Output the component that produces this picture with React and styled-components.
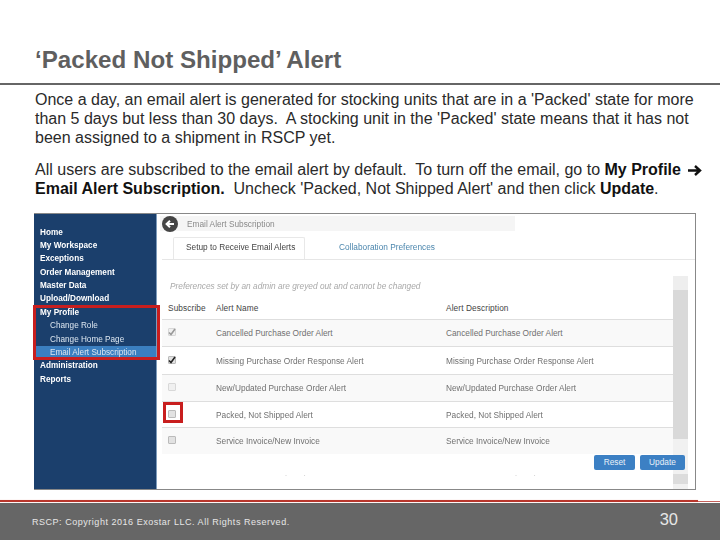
import React from "react";
import styled, { createGlobalStyle } from "styled-components";

const GlobalStyle = createGlobalStyle`
  html, body {
    margin: 0;
    padding: 0;
    background: #fff;
    font-family: "Liberation Sans", Arial, sans-serif;
  }
`;

const Slide = styled.div`
  display: flex;
  flex-direction: column;
  width: 720px;
  height: 540px;
  overflow: hidden;
  background: #fff;
`;

const Title = styled.h1`
  margin: 0;
  padding: 46px 0 0 35px;
  height: 37px;
  font-size: 24.15px;
  line-height: 28px;
  font-weight: 700;
  color: #5f5f5f;
`;

const TitleRule = styled.div`
  height: 2px;
  background: #666;
`;

const Body = styled.div`
  padding: 5px 0 0 35px;
  color: #2a2a2a;
  font-size: 16px;
  line-height: 19px;
  b {
    color: #111;
  }
`;

const Para = styled.p`
  margin: 0 0 13px;
  white-space: nowrap;
`;

const Arrow = styled.svg`
  width: 15px;
  height: 11px;
  margin-left: 6px;
  vertical-align: -1px;
`;

const Shot = styled.div`
  position: relative;
  display: flex;
  width: 662px;
  height: 277px;
  margin: 2px 0 0 34px;
  box-sizing: border-box;
  border: 1px solid #888;
  border-left: 0;
  background: #fff;
`;

const Sidebar = styled.nav`
  width: 123px;
  flex: none;
  box-sizing: border-box;
  padding: 11.5px 0 0 2px;
  background: #1b3f6c;
  border-right: 1px solid #7e9cbc;
  filter: blur(0.3px);
`;

const NavItem = styled.div`
  height: 13.4px;
  padding-left: ${(p) => (p.$sub ? "14px" : "4px")};
  font-size: 8.2px;
  line-height: 13.4px;
  font-weight: ${(p) => (p.$sub ? 400 : 700)};
  color: ${(p) => (p.$sub ? "#dce6f0" : "#fff")};
  background: ${(p) => (p.$active ? "#3b7fc0" : "transparent")};
  white-space: nowrap;
`;

const Panel = styled.div`
  position: relative;
  flex: 1;
  display: flex;
  flex-direction: column;
  min-width: 0;
  padding: 2px 0 0 5px;
  filter: blur(0.3px);
`;

const PanelHead = styled.div`
  display: flex;
  align-items: center;
  gap: 9px;
  width: 355px;
  height: 15px;
  margin-left: -2px;
  padding-left: 2px;
  box-sizing: border-box;
  background: #f5f5f5;
  font-size: 8.3px;
  color: #8a8a8a;
`;

const BackIcon = styled.svg`
  width: 16px;
  height: 16px;
  flex: none;
`;

const Tabs = styled.div`
  display: flex;
  align-items: stretch;
  height: 22px;
  margin-top: 6px;
  border-bottom: 1px solid #e6e6e6;
`;

const Tab = styled.div`
  width: 132px;
  height: 22px;
  margin-left: 11px;
  box-sizing: border-box;
  padding-left: 12px;
  border: 1px solid #e8e8e8;
  border-bottom: 0;
  border-radius: 2px 2px 0 0;
  background: #fff;
  font-size: 8.3px;
  line-height: 19px;
  color: #444;
  white-space: nowrap;
`;

const TabLink = styled.div`
  margin-left: 34px;
  font-size: 8.3px;
  line-height: 20px;
  color: #4b86ad;
  white-space: nowrap;
`;

const Note = styled.div`
  margin: 20px 0 0 8px;
  height: 31px;
  font-size: 8.3px;
  line-height: 12px;
  font-style: italic;
  color: #a9a9a9;
  white-space: nowrap;
`;

const TableArea = styled.div`
  position: relative;
  display: flex;
  flex: 1;
  margin-top: -14px;
  min-height: 0;
`;

const TableCol = styled.div`
  width: 511px;
  flex: none;
`;

const Row = styled.div`
  display: grid;
  grid-template-columns: 48px 230px 1fr;
  align-items: center;
  height: ${(p) => p.$h}px;
  padding-left: 6px;
  box-sizing: border-box;
  border-bottom: ${(p) => (p.$plain ? "0" : "1px solid #dedede")};
  background: ${(p) => (p.$alt ? "#f9f9f9" : "#fff")};
  font-size: 8.3px;
  color: #707070;
  white-space: nowrap;
`;

const HeadCell = styled.span`
  color: #444;
  letter-spacing: 0.1px;
`;

const Check = styled.span`
  display: flex;
  align-items: center;
  justify-content: center;
  width: 8px;
  height: 8px;
  margin-top: -2px;
  box-sizing: border-box;
  border: 1px solid ${(p) => (p.$dim ? "#d8d8d8" : "#bbb")};
  border-radius: 1px;
  background: ${(p) => (p.$dim ? "#f0f0f0" : "#e2e2e2")};
`;

const Tick = styled.svg`
  width: 8px;
  height: 8px;
  flex: none;
`;

const CutOff = styled.div`
  display: grid;
  grid-template-columns: 230px 1fr;
  padding: 19px 0 0 123px;
  font-size: 6px;
  line-height: 4px;
  color: #777;
  word-spacing: 15px;
`;

const Scrollbar = styled.div`
  width: 15px;
  flex: none;
  display: flex;
  flex-direction: column;
  margin-top: -21px;
  background: #f1f1f1;
`;

const ScrollPart = styled.div`
  height: ${(p) => p.$h}px;
  background: ${(p) => p.$c};
`;

const Buttons = styled.div`
  position: absolute;
  right: 10px;
  bottom: 19px;
  display: flex;
  gap: 5px;
`;

const Button = styled.div`
  width: ${(p) => p.$w}px;
  height: 15px;
  border-radius: 2px;
  background: #3c80c4;
  color: #e8f0f8;
  font-size: 8.3px;
  line-height: 14px;
  text-align: center;
`;

const Highlight = styled.div`
  position: absolute;
  box-sizing: border-box;
  border: 3px solid #c81e1e;
  left: ${(p) => p.$x}px;
  top: ${(p) => p.$y}px;
  width: ${(p) => p.$w}px;
  height: ${(p) => p.$h}px;
`;

const Footer = styled.footer`
  margin-top: auto;
`;

const RedLine = styled.div`
  display: flex;
  align-items: center;
  height: 4px;
`;

const RedThick = styled.div`
  width: 698px;
  height: 2px;
  background: #b8362c;
  box-shadow: 0 0 1px #e8a89f;
`;

const RedThin = styled.div`
  flex: 1;
  height: 1px;
  background: #c4605a;
`;

const FooterBar = styled.div`
  display: flex;
  align-items: center;
  justify-content: space-between;
  height: 37px;
  box-sizing: border-box;
  padding: 0 42px 0 32px;
  background: #666;
  color: #e6e6e6;
`;

const Copyright = styled.span`
  padding-top: 1px;
  font-size: 9px;
  letter-spacing: 0.53px;
`;

const PageNum = styled.span`
  margin-top: -5px;
  font-size: 16.5px;
`;

const navItems = [
  { label: "Home" },
  { label: "My Workspace" },
  { label: "Exceptions" },
  { label: "Order Management" },
  { label: "Master Data" },
  { label: "Upload/Download" },
  { label: "My Profile" },
  { label: "Change Role", sub: true },
  { label: "Change Home Page", sub: true },
  { label: "Email Alert Subscription", sub: true, active: true },
  { label: "Administration" },
  { label: "Reports" },
];

const alerts = [
  { name: "Cancelled Purchase Order Alert", state: "locked", h: 27 },
  { name: "Missing Purchase Order Response Alert", state: "on", h: 28 },
  { name: "New/Updated Purchase Order Alert", state: "dim", h: 27 },
  { name: "Packed, Not Shipped Alert", state: "off", h: 26 },
  { name: "Service Invoice/New Invoice", state: "off", h: 26, plain: true },
];

const Checkbox = ({ state }) => (
  <Check $dim={state === "locked" || state === "dim"}>
    {(state === "locked" || state === "on") && (
      <Tick viewBox="0 0 8 8">
        <path
          d="M1 4.5 L3 6.5 L7 1"
          fill="none"
          stroke={state === "on" ? "#222" : "#999"}
          strokeWidth="1.6"
        />
      </Tick>
    )}
  </Check>
);

export default function App() {
  return (
    <Slide>
      <GlobalStyle />
      <Title>‘Packed Not Shipped’ Alert</Title>
      <TitleRule />
      <Body>
        <Para>
          Once a day, an email alert is generated for stocking units that are in a 'Packed' state for more
          <br />
          than 5 days but less than 30 days.&nbsp; A stocking unit in the 'Packed' state means that it has not
          <br />
          been assigned to a shipment in RSCP yet.
        </Para>
        <Para>
          All users are subscribed to the email alert by default.&nbsp; To turn off the email, go to <b>My Profile</b>
          <Arrow viewBox="0 0 15 11">
            <path d="M1 5.5 H12 M8 1 L13 5.5 L8 10" fill="none" stroke="#111" strokeWidth="2.4" />
          </Arrow>
          <br />
          <b>Email Alert Subscription.</b>&nbsp; Uncheck 'Packed, Not Shipped Alert' and then click <b>Update</b>.
        </Para>
      </Body>
      <Shot>
        <Sidebar>
          {navItems.map((item) => (
            <NavItem key={item.label} $sub={item.sub} $active={item.active}>
              {item.label}
            </NavItem>
          ))}
        </Sidebar>
        <Panel>
          <PanelHead>
            <BackIcon viewBox="0 0 16 16">
              <circle cx="8" cy="8" r="8" fill="#454545" />
              <path d="M12 8 H5 M8 4.8 L4.6 8 L8 11.2" fill="none" stroke="#fff" strokeWidth="2" />
            </BackIcon>
            Email Alert Subscription
          </PanelHead>
          <Tabs>
            <Tab>Setup to Receive Email Alerts</Tab>
            <TabLink>Collaboration Preferences</TabLink>
          </Tabs>
          <Note>Preferences set by an admin are greyed out and cannot be changed</Note>
          <TableArea>
            <TableCol>
              <Row $h={23}>
                <HeadCell>Subscribe</HeadCell>
                <HeadCell>Alert Name</HeadCell>
                <HeadCell>Alert Description</HeadCell>
              </Row>
              {alerts.map((alert, index) => (
                <Row key={alert.name} $h={alert.h} $alt={index % 2 === 0} $plain={alert.plain}>
                  <Checkbox state={alert.state} />
                  <span>{alert.name}</span>
                  <span>{alert.name}</span>
                </Row>
              ))}
              <CutOff>
                <span>· ·</span>
                <span>· ·</span>
              </CutOff>
            </TableCol>
            <Scrollbar>
              <ScrollPart $h={14} $c="#eeeeee" />
              <ScrollPart $h={149} $c="#d9d9d9" />
              <ScrollPart $h={35} $c="#f1f1f1" />
              <ScrollPart $h={10} $c="#dcdcdc" />
            </Scrollbar>
            <Buttons>
              <Button $w={41}>Reset</Button>
              <Button $w={45}>Update</Button>
            </Buttons>
          </TableArea>
        </Panel>
        <Highlight $x={-1} $y={91} $w={127} $h={55} />
        <Highlight $x={129} $y={188} $w={20} $h={21} />
      </Shot>
      <Footer>
        <RedLine>
          <RedThick />
          <RedThin />
        </RedLine>
        <FooterBar>
          <Copyright>RSCP: Copyright 2016 Exostar LLC. All Rights Reserved.</Copyright>
          <PageNum>30</PageNum>
        </FooterBar>
      </Footer>
    </Slide>
  );
}
